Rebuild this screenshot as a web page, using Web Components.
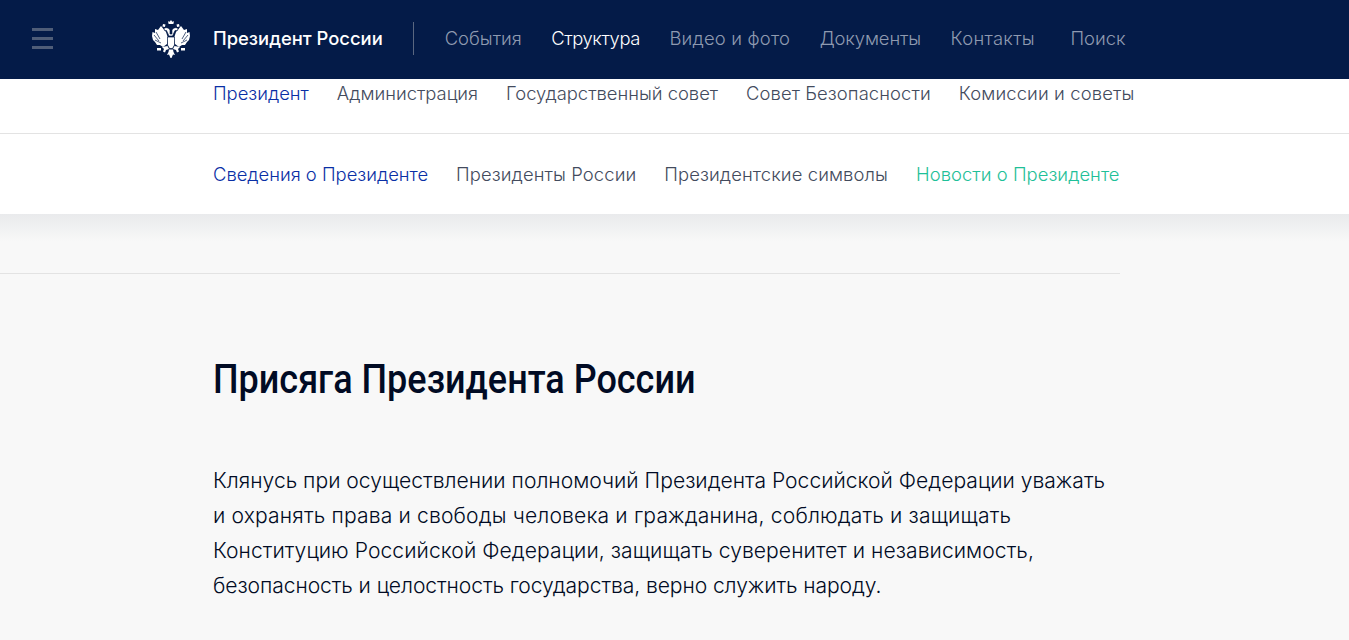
<!DOCTYPE html>
<html lang="ru">
<head>
<meta charset="utf-8">
<title>Присяга Президента России</title>
<style>
  html, body { margin: 0; padding: 0; height: 640px; overflow: hidden; background: #f8f8f8; }
  body { font-family: Inter, Roboto, "Liberation Sans", sans-serif; font-weight: 300; }
</style>
</head>
<body>
<site-header></site-header>
<sub-nav>
  <a class="active">Президент</a><a>Администрация</a><a>Государственный совет</a><a style="letter-spacing:.1px">Совет Безопасности</a><a style="letter-spacing:.13px">Комиссии и советы</a>
</sub-nav>
<page-content></page-content>
<script>
class SiteHeader extends HTMLElement {
    constructor() {
        super();
        this.attachShadow({ mode: 'open' });
        this.shadowRoot.innerHTML = `
            <style>
                :host { display: flex; align-items: center; box-sizing: border-box; height: 79px; padding-bottom: 2px; background: #041b48; color: #8f9ab0; font-size: 18.4px; }
                .burger { display: flex; flex-direction: column; gap: 6px; width: 21px; margin-left: 32px; }
                .burger i { display: block; height: 3px; background: #4f5d78; }
                .eagle { width: 40px; height: 40px; margin-left: 98px; }
                .title { margin-left: 22px; color: #fff; font-weight: 500; padding-right: 30px; line-height: 33px; border-right: 1px solid #5a6780; }
                nav { display: flex; margin-left: 31px; margin-bottom: 2px; }
                nav a { white-space: nowrap; margin-right: 29.500px; }
                nav a.on { color: #fff; letter-spacing: -.4px; }
                nav a.search { margin-left: 6px; }
            </style>
            <div class="burger"><i></i><i></i><i></i></div>
            <svg class="eagle" viewBox="0 0 40 40" fill="#fff">
                <defs>
                    <g id="wing">
                        <path d="M10 7l5 6 2 6-1 6-4 3-3-2-3 0-2-3-2-2-1-4 .5-4 2.500 1 0-4 3 1z"/>
                        <path d="M5 13l4 7M3 16l5 6M4 21l6 3" fill="none" stroke="#041b48" stroke-width=".7"/>
                    </g>
                </defs>
                <path d="M20 1l1.300 1.700 1.700-.4-.6 2.700h-4.800l-.6-2.700 1.700.4z"/>
                <path d="M12 5l2.500.6-.6 2.400-2.500-.6zM28 5l-2.500.6.6 2.400 2.500-.6z"/>
                <use href="#wing"/>
                <use href="#wing" transform="matrix(-1 0 0 1 40 0)"/>
                <path d="M13 9.500c2-1.500 4.500-.8 6 1.500v4h2v-4c1.500-2.300 4-3 6-1.500l-.5 2h-2.500l-2.500 5.500h-3.500L15.500 11.500h-2z" stroke="#041b48" stroke-width=".6"/>
                <path d="M16.500 18h7v8l-2 3.500h-3l-2-3.500z" stroke="#041b48" stroke-width=".7"/>
                <path d="M11 28l5.500-1 1.500 3-3 1-1 2.500-2-1 1-2.500zM29 28l-5.500-1-1.500 3 3 1 1 2.500 2-1-1-2.500z"/>
                <path d="M18 30.500h4l.5 2.500 1.500 3-2-.5-1.500 3.500h-1L18 35.500l-2 .5 1.500-3z"/>
                <path d="M6 29h4v2.500H6zM34 29h-4v2.500h4z"/>
            </svg>
            <div class="title">Президент России</div>
            <nav>
                <a>События</a><a class="on">Структура</a><a style="letter-spacing:.2px">Видео и фото</a><a style="letter-spacing:-.1px">Документы</a><a style="letter-spacing:.3px">Контакты</a><a class="search">Поиск</a>
            </nav>
        `;
    }
}

class SubNav extends HTMLElement {
    constructor() {
        super();
        this.attachShadow({ mode: 'open' });
        this.shadowRoot.innerHTML = `
            <style>
                :host { display: block; background: #fff; position: relative; font-size: 18.4px; color: #434b5d; }
                .row { display: flex; padding-left: 213px; }
                .one { height: 55px; padding-top: 2px; box-sizing: border-box; border-bottom: 1px solid #e3e3e3; align-items: flex-start; line-height: 24px; }
                .two { height: 80px; align-items: center; }
                ::slotted(a) { margin-right: 28px; white-space: nowrap; }
                ::slotted(a.active) { color: #0a2fa5; }
                a { margin-right: 28px; white-space: nowrap; }
                a.active { color: #0a2fa5; }
                a.news { color: #1fc098; letter-spacing: .05px; }
                a.wide { letter-spacing: .11px; }
            </style>
            <div class="row one"><slot></slot></div>
            <div class="row two">
                <a class="active">Сведения о Президенте</a><a class="wide">Президенты России</a><a class="wide">Президентские символы</a><a class="news">Новости о Президенте</a>
            </div>
        `;
    }
}

class PageContent extends HTMLElement {
    constructor() {
        super();
        this.attachShadow({ mode: 'open' });
        this.shadowRoot.innerHTML = `
            <style>
                :host { display: block; background: linear-gradient(#e9eaec, #f8f8f8 28px); color: #010b24; }
                hr { width: 1120px; height: 1px; margin: 0; border: 0; background: #e3e3e3; }
                .spacer { height: 59px; }
                .body { padding: 0 0 0 213px; width: 900px; }
                h1 { margin: 75px 0 0; font: 500 41px/60px Roboto, sans-serif; transform: scaleX(.878); transform-origin: left; white-space: nowrap; }
                p { margin: 55.400px 0 0; font-size: 21.100px; line-height: 34.700px; }
                p span { display: block; white-space: nowrap; }
            </style>
            <div class="spacer"></div>
            <hr>
            <div class="body">
                <h1>Присяга Президента России</h1>
                <p><span>Клянусь при осуществлении полномочий Президента Российской Федерации уважать </span><span style="letter-spacing:.15px">и охранять права и свободы человека и гражданина, соблюдать и защищать </span><span style="letter-spacing:.06px">Конституцию Российской Федерации, защищать суверенитет и независимость, </span><span style="letter-spacing:-.08px">безопасность и целостность государства, верно служить народу.</span></p>
            </div>
        `;
    }
}

customElements.define('site-header', SiteHeader);
customElements.define('sub-nav', SubNav);
customElements.define('page-content', PageContent);
</script>
</body>
</html>
